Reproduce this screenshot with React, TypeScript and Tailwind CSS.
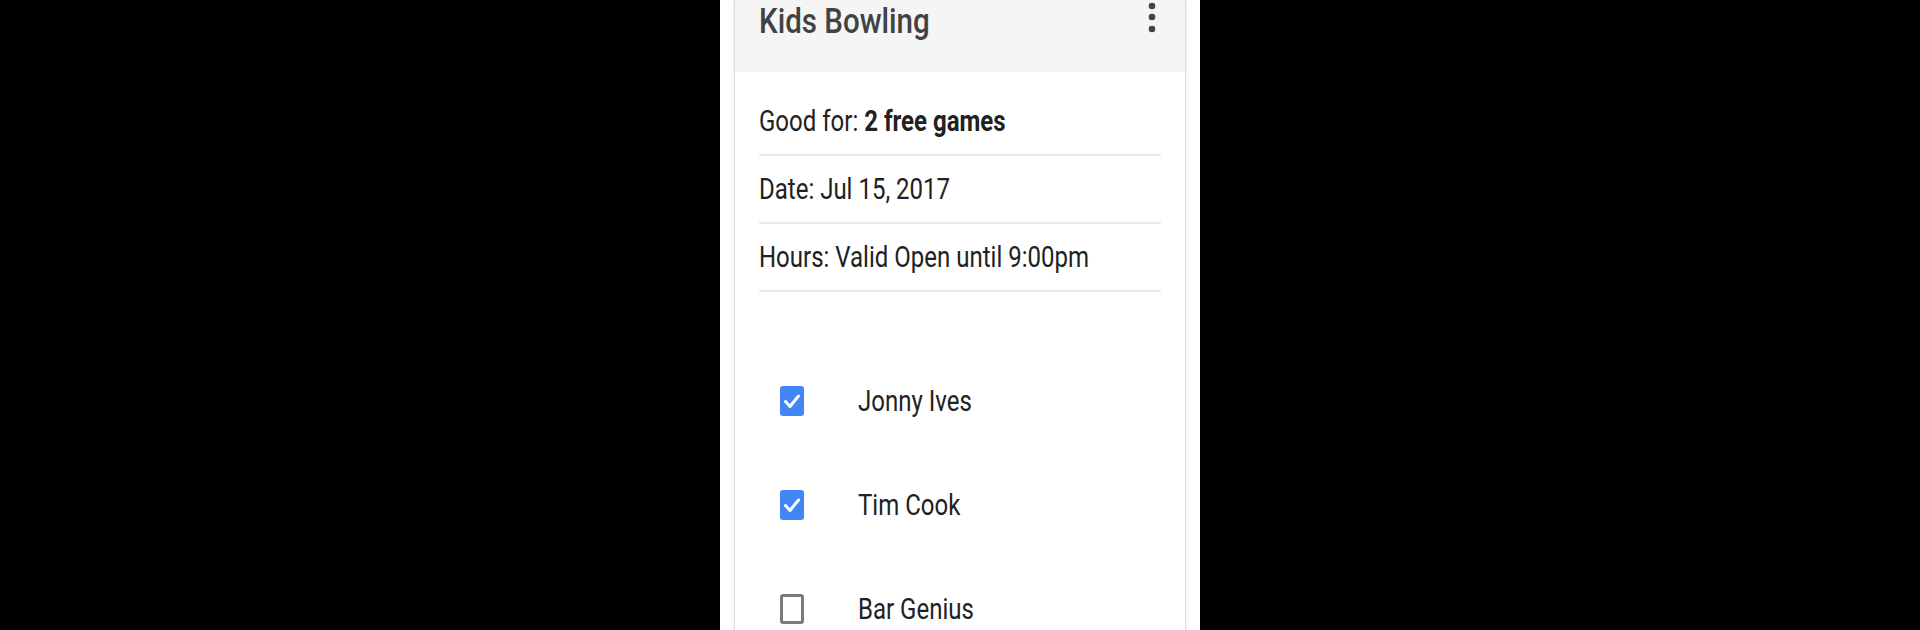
import React from "react";

const details = [
  { label: "Good for: ", value: "2 free games" },
  { label: "Date: Jul 15, 2017" },
  { label: "Hours: Valid Open until 9:00pm" },
];

const people = [
  { name: "Jonny Ives", checked: true },
  { name: "Tim Cook", checked: true },
  { name: "Bar Genius", checked: false },
];

function CheckBox({ checked }: { checked: boolean }) {
  if (!checked) {
    return <div className="w-[24px] h-[30px] rounded-[3px] border-[3px] border-[#7a7a7a] bg-white" />;
  }
  return (
    <div className="w-[24px] h-[30px] rounded-[3px] bg-[#4285f4]">
      <svg viewBox="0 0 24 30" preserveAspectRatio="none" className="w-full h-full">
        <path d="M5.5 15.5 L10 20.5 L18.5 10" fill="none" stroke="white" strokeWidth="3" strokeLinecap="round" strokeLinejoin="round" />
      </svg>
    </div>
  );
}

export default function App() {
  return (
    <div className="w-full h-[630px] bg-black flex justify-center overflow-hidden font-['Roboto',sans-serif]">
      <div className="w-[480px] h-full bg-white px-[14px]">
        <div className="h-full bg-white border-x border-[#dedede] shadow-[0_0_3px_rgba(0,0,0,0.12)]">
          {/* header */}
          <div className="h-[72px] bg-[#f5f5f5] pl-[24px] pr-[29px] flex justify-between items-start">
            <span className="mt-[6px] inline-block scale-y-[1.2] text-[29.5px] leading-[30px] font-medium text-[#424242]">
              Kids Bowling
            </span>
            <svg width="8" height="34" viewBox="0 0 8 34" className="mt-[2px]">
              <circle cx="4" cy="4" r="3.3" fill="#444" />
              <circle cx="4" cy="15" r="3.3" fill="#444" />
              <circle cx="4" cy="27" r="3.3" fill="#444" />
            </svg>
          </div>

          <div className="px-[24px] pt-[16px]">
            {details.map((d) => (
              <div key={d.label} className="h-[68px] border-b-2 border-[#ebebeb] flex items-center">
                <span className="inline-block scale-y-[1.2] text-[24px] leading-[24px] text-[#212121]">
                  {d.label}
                  {d.value && <b className="font-bold">{d.value}</b>}
                </span>
              </div>
            ))}
          </div>

          <div className="pt-[57px] pl-[45px]">
            {people.map((p) => (
              <div key={p.name} className="h-[104px] flex items-center">
                <CheckBox checked={p.checked} />
                <span className="ml-[54px] inline-block scale-y-[1.2] text-[24px] leading-[24px] text-[#212121]">
                  {p.name}
                </span>
              </div>
            ))}
          </div>
        </div>
      </div>
    </div>
  );
}
